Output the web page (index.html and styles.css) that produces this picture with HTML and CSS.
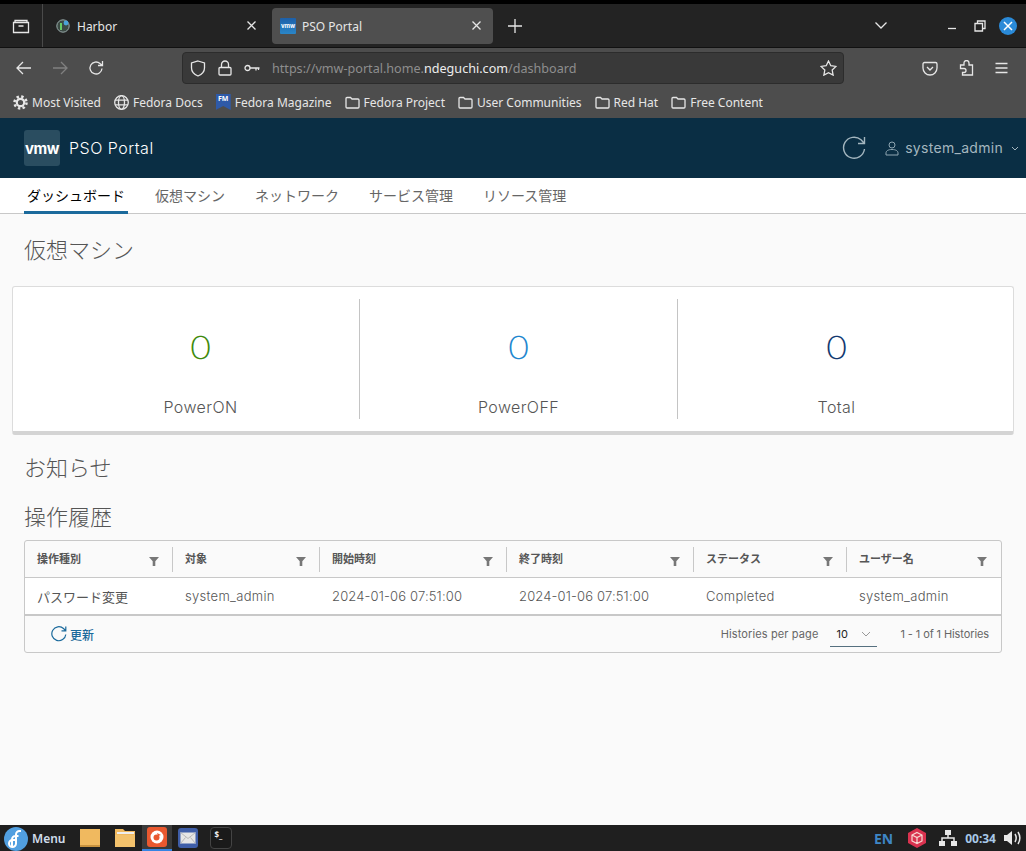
FILE: index.html
```html
<!DOCTYPE html>
<html lang="ja">

<head>
    <meta charset="UTF-8">
    <meta name="viewport" content="width=device-width, initial-scale=1.0">
    <title>PSO Portal</title>
    <link rel="stylesheet" href="styles.css">
</head>

<body>
    <div class="browser">
        <div class="tabbar">
            <div class="tab-list-btn">
                <svg class="ico" width="18" height="18" viewBox="0 0 18 18"><path d="M3 5.500V3.500h12v2M1.500 5.500h15v10h-15zM6.500 9h5"/></svg>
            </div>
            <div class="tab">
                <svg class="favicon" width="14" height="14" viewBox="0 0 14 14"><circle cx="7" cy="7" r="6.200" fill="#3c4a44" stroke="#9aa" stroke-width="1"/><path d="M5 4v7" stroke="#6c6" stroke-width="2"/><circle cx="10" cy="4" r="2.400" fill="#4aa3d8"/></svg>
                <span class="tab-title">Harbor</span>
                <svg class="ico tab-close" width="9" height="9" viewBox="0 0 9 9"><path d="M.5 .5l8 8M8.500 .5l-8 8"/></svg>
            </div>
            <div class="tab tab-active">
                <span class="favicon-vmw">vmw</span>
                <span class="tab-title">PSO Portal</span>
                <svg class="ico tab-close" width="9" height="9" viewBox="0 0 9 9"><path d="M.5 .5l8 8M8.500 .5l-8 8"/></svg>
            </div>
            <svg class="ico new-tab" width="14" height="14" viewBox="0 0 14 14"><path d="M7 0v14M0 7h14"/></svg>
            <div class="spacer"></div>
            <svg class="ico tabs-down" width="12" height="7" viewBox="0 0 12 7"><path d="M.5 .5L6 6 11.500 .5"/></svg>
            <div class="win-btns">
                <svg class="ico" width="10" height="10" viewBox="0 0 10 10"><path d="M1 7.500h8"/></svg>
                <svg class="ico" width="12" height="12" viewBox="0 0 12 12"><path d="M1 3.500h7.500V11H1zM3.500 3.500V1H11v7.500H8.500"/></svg>
                <span class="win-close">
                    <svg class="ico-white" width="10" height="10" viewBox="0 0 10 10"><path d="M1 1l8 8M9 1l-8 8"/></svg>
                </span>
            </div>
        </div>

        <div class="toolbar">
            <svg class="ico nav-btn" width="16" height="14" viewBox="0 0 16 14"><path d="M15 7H1M7 1L1 7l6 6"/></svg>
            <svg class="ico nav-btn nav-off" width="16" height="14" viewBox="0 0 16 14"><path d="M1 7h14M9 1l6 6-6 6"/></svg>
            <svg class="ico nav-btn" width="16" height="16" viewBox="0 0 16 16"><path d="M14 8.500a6 6 0 1 1-2-5L14.500 5.500M14.500 1v4.500H10"/></svg>
            <div class="urlbar">
                <svg class="ico" width="16" height="17" viewBox="0 0 16 17"><path d="M8 1l6.500 2v5c0 4-3 6.500-6.500 8-3.500-1.500-6.500-4-6.500-8V3z"/></svg>
                <svg class="ico" width="14" height="16" viewBox="0 0 14 16"><path d="M2 7.500h10a1 1 0 0 1 1 1V14a1 1 0 0 1-1 1H2a1 1 0 0 1-1-1V8.500a1 1 0 0 1 1-1zM3.500 7.500V4.500a3.500 3.500 0 0 1 7 0v3"/></svg>
                <svg class="ico" width="16" height="10" viewBox="0 0 16 10"><circle cx="3.500" cy="5" r="2.500"/><path d="M6 5h9.500M12 5v2.500M14.500 5v2"/></svg>
                <span class="url">https://vmw-portal.home.<b>ndeguchi.com</b>/dashboard</span>
                <div class="spacer"></div>
                <svg class="ico" width="17" height="16" viewBox="0 0 17 16"><path d="M8.500 1l2.300 4.700 5.200.7-3.800 3.600.9 5.100-4.600-2.400-4.600 2.400.9-5.100L1 6.400l5.200-.7z"/></svg>
            </div>
            <div class="toolbar-right">
                <svg class="ico" width="16" height="15" viewBox="0 0 16 15"><path d="M2.500 1.500h11a1.500 1.500 0 0 1 1.500 1.500v4a7 7 0 0 1-14 0V3a1.500 1.500 0 0 1 1.500-1.500zM5 6l3 3 3-3"/></svg>
                <svg class="ico" width="15" height="16" viewBox="0 0 15 16"><path d="M5 5V3a2.500 2.500 0 0 1 5 0v2h3.500v10H3.500v-2.500H5a2 2 0 0 0 0-4H1.500V5z"/></svg>
                <svg class="ico" width="13" height="12" viewBox="0 0 13 12"><path d="M.5 1.500h12M.5 6h12M.5 10.500h12"/></svg>
            </div>
        </div>

        <div class="bookmarks">
            <span class="bm">
                <svg class="gear" width="15" height="15" viewBox="0 0 15 15"><circle cx="7.500" cy="7.500" r="6" stroke-width="2.500" stroke-dasharray="2.400 2.310"/><circle cx="7.500" cy="7.500" r="3.700" stroke-width="2.200"/></svg>
                Most Visited
            </span>
            <span class="bm">
                <svg class="ico" width="15" height="15" viewBox="0 0 15 15"><circle cx="7.500" cy="7.500" r="6.800"/><ellipse cx="7.500" cy="7.500" rx="3" ry="6.800"/><path d="M1 5.200h13M1 9.800h13"/></svg>
                Fedora Docs
            </span>
            <span class="bm"><span class="fm-icon">FM</span>Fedora Magazine</span>
            <span class="bm"><svg class="ico" width="15" height="13" viewBox="0 0 15 13"><path d="M1 2.500a1 1 0 0 1 1-1h3.500l1.500 1.500h6a1 1 0 0 1 1 1v7a1 1 0 0 1-1 1H2a1 1 0 0 1-1-1z"/></svg>Fedora Project</span>
            <span class="bm"><svg class="ico" width="15" height="13" viewBox="0 0 15 13"><path d="M1 2.500a1 1 0 0 1 1-1h3.500l1.500 1.500h6a1 1 0 0 1 1 1v7a1 1 0 0 1-1 1H2a1 1 0 0 1-1-1z"/></svg>User Communities</span>
            <span class="bm"><svg class="ico" width="15" height="13" viewBox="0 0 15 13"><path d="M1 2.500a1 1 0 0 1 1-1h3.500l1.500 1.500h6a1 1 0 0 1 1 1v7a1 1 0 0 1-1 1H2a1 1 0 0 1-1-1z"/></svg>Red Hat</span>
            <span class="bm"><svg class="ico" width="15" height="13" viewBox="0 0 15 13"><path d="M1 2.500a1 1 0 0 1 1-1h3.500l1.500 1.500h6a1 1 0 0 1 1 1v7a1 1 0 0 1-1 1H2a1 1 0 0 1-1-1z"/></svg>Free Content</span>
        </div>
    </div>

    <div class="app">
        <header class="app-header">
            <div class="logo">vmw</div>
            <div class="app-name">PSO Portal</div>
            <div class="spacer"></div>
            <svg class="header-refresh" width="24" height="24" viewBox="0 0 24 24"><path d="M22.500 13a10.500 10.500 0 1 1-3.500-9.200L22 7M22.500 1v6.500H16"/></svg>
            <svg class="header-user" width="14" height="15" viewBox="0 0 14 15"><circle cx="7" cy="4" r="3"/><path d="M1 14v-2c0-2 2-3.500 6-3.500s6 1.500 6 3.500v2z"/></svg>
            <span class="user-name">system_admin</span>
            <svg class="header-caret" width="8" height="5" viewBox="0 0 8 5"><path d="M1 1l3 3 3-3"/></svg>
        </header>

        <nav class="subnav">
            <a class="subnav-item active">ダッシュボード</a>
            <a class="subnav-item">仮想マシン</a>
            <a class="subnav-item">ネットワーク</a>
            <a class="subnav-item">サービス管理</a>
            <a class="subnav-item">リソース管理</a>
        </nav>

        <main class="content">
            <h2 class="section-title">仮想マシン</h2>

            <div class="card">
                <div class="stat">
                    <div class="stat-num green">0</div>
                    <div class="stat-label">PowerON</div>
                </div>
                <div class="stat">
                    <div class="stat-num blue">0</div>
                    <div class="stat-label">PowerOFF</div>
                </div>
                <div class="stat">
                    <div class="stat-num navy">0</div>
                    <div class="stat-label">Total</div>
                </div>
            </div>

            <h2 class="section-title title-notice">お知らせ</h2>
            <h2 class="section-title title-history">操作履歴</h2>

            <div class="datagrid">
                <div class="grid-row grid-head">
                    <div class="cell col-1">操作種別<svg class="filter" width="10" height="10" viewBox="0 0 10 10"><path d="M0 1h10L6.300 5.200V10H3.700V5.200z"/></svg></div>
                    <div class="cell col-2">対象<svg class="filter" width="10" height="10" viewBox="0 0 10 10"><path d="M0 1h10L6.300 5.200V10H3.700V5.200z"/></svg></div>
                    <div class="cell col-3">開始時刻<svg class="filter" width="10" height="10" viewBox="0 0 10 10"><path d="M0 1h10L6.300 5.200V10H3.700V5.200z"/></svg></div>
                    <div class="cell col-3">終了時刻<svg class="filter" width="10" height="10" viewBox="0 0 10 10"><path d="M0 1h10L6.300 5.200V10H3.700V5.200z"/></svg></div>
                    <div class="cell col-5">ステータス<svg class="filter" width="10" height="10" viewBox="0 0 10 10"><path d="M0 1h10L6.300 5.200V10H3.700V5.200z"/></svg></div>
                    <div class="cell col-6">ユーザー名<svg class="filter" width="10" height="10" viewBox="0 0 10 10"><path d="M0 1h10L6.300 5.200V10H3.700V5.200z"/></svg></div>
                </div>
                <div class="grid-row grid-body">
                    <div class="cell col-1 cell-ja">パスワード変更</div>
                    <div class="cell col-2">system_admin</div>
                    <div class="cell col-3">2024-01-06 07:51:00</div>
                    <div class="cell col-3">2024-01-06 07:51:00</div>
                    <div class="cell col-5">Completed</div>
                    <div class="cell col-6">system_admin</div>
                </div>
                <div class="grid-foot">
                    <button class="refresh-btn">
                        <svg width="16" height="16" viewBox="0 0 16 16"><path d="M14.800 8.500a7 7 0 1 1-2.300-6L14.500 4.500M14.800 .5v4.300h-4.300"/></svg>
                        更新
                    </button>
                    <div class="spacer"></div>
                    <span class="per-page">Histories per page</span>
                    <div class="page-select">
                        <span>10</span>
                        <svg width="10" height="6" viewBox="0 0 10 6"><path d="M1 1l4 4 4-4"/></svg>
                    </div>
                    <span class="page-count">1 - 1 of 1 Histories</span>
                </div>
            </div>
        </main>
    </div>

    <footer class="taskbar">
        <div class="fedora-logo">
            <svg width="24" height="24" viewBox="0 0 24 24"><circle cx="12" cy="12" r="12" fill="#519fe0"/><path d="M8 21v-8.500a3.500 3.500 0 0 1 3.500-3.500h3M12 13H8.500a3.500 3.500 0 1 0 3.500 3.500V7.500A3.500 3.500 0 0 1 15.500 4H17" fill="none" stroke="#fff" stroke-width="2"/></svg>
        </div>
        <span class="menu-label">Menu</span>
        <div class="launchers">
            <span class="launcher"><svg width="22" height="22" viewBox="0 0 22 22"><path d="M1 2h20v18H1z" fill="#f0b95f"/><path d="M1 18h20v2H1z" fill="#c8923f"/></svg></span>
            <span class="launcher"><svg width="22" height="22" viewBox="0 0 22 22"><path d="M1 2h8l2 2h10v16H1z" fill="#f0b95f"/><path d="M3 5h17v2H3z" fill="#eee"/><path d="M1 8h20v12H1z" fill="#f3c26c"/></svg></span>
            <span class="launcher launcher-on"><svg width="20" height="20" viewBox="0 0 20 20"><rect width="20" height="20" rx="3" fill="#e9582f"/><circle cx="10" cy="10" r="6.500" fill="#fff"/><circle cx="9.500" cy="10.500" r="3" fill="#e9582f"/><path d="M10 6l4 2-3 1z" fill="#e9582f"/></svg></span>
            <span class="launcher launcher-sm"><svg width="20" height="20" viewBox="0 0 20 20"><rect width="20" height="20" rx="3" fill="#3f5ea8"/><rect x="2.500" y="4.500" width="15" height="11" fill="#e6e6e6"/><path d="M2.500 4.500l7.500 6 7.500-6M2.500 15.500l5-6M17.500 15.500l-5-6" fill="none" stroke="#b8b8b8"/></svg></span>
            <span class="launcher launcher-sm"><span class="term-icon">$_</span></span>
        </div>
        <div class="spacer"></div>
        <span class="lang">EN</span>
        <svg class="tray-box" width="18" height="20" viewBox="0 0 18 20"><path d="M9 0l9 5v10l-9 5-9-5V5z" fill="#d9324f"/><path d="M9 4.500l5 2.500v6l-5 2.500-5-2.500V7zM4 7l5 2.500L14 7M9 9.500v6" fill="none" stroke="#f7dcd5" stroke-width="1.200"/></svg>
        <svg class="tray-net" width="18" height="16" viewBox="0 0 18 16"><path d="M6 0h6v5H6zM0 11h6v5H0zM12 11h6v5h-6z" fill="#e8e8e8"/><path d="M9 5v3M3 11V8h12v3" fill="none" stroke="#e8e8e8" stroke-width="1.500"/></svg>
        <span class="clock">00:34</span>
        <svg class="tray-vol" width="18" height="16" viewBox="0 0 18 16"><path d="M0 5h3l5-4v14l-5-4H0z" fill="#e8e8e8"/><path d="M11 4c1.500 2.500 1.500 5.500 0 8M14 2c2.500 4 2.500 8 0 12" fill="none" stroke="#e8e8e8" stroke-width="1.500"/></svg>
    </footer>
</body>

</html>
```

FILE: styles.css
```css
* {
    box-sizing: border-box;
}

html,
body {
    margin: 0;
    height: 851px;
    overflow: hidden;
}

body {
    display: flex;
    flex-direction: column;
    font-family: Inter, "Noto Sans CJK JP", sans-serif;
    background-color: #fafafa;
}

.spacer {
    flex: 1;
}

.ico {
    fill: none;
    stroke: #e6e6e6;
    stroke-width: 1.3;
    flex-shrink: 0;
}

.ico-white {
    fill: none;
    stroke: #fff;
    stroke-width: 1.5;
}

/* browser chrome */
.browser {
    height: 118px;
    flex-shrink: 0;
    padding-top: 4px;
    background-color: #000;
    font-family: "Noto Sans", sans-serif;
    color: #e6e6e6;
}

.tabbar {
    height: 44px;
    display: flex;
    align-items: center;
    background-color: #232323;
    border-bottom: 1px solid #111;
}

.tab-list-btn {
    width: 43px;
    height: 43px;
    display: flex;
    align-items: center;
    justify-content: center;
    border-right: 1px solid #4a4a4a;
}

.tab {
    width: 229px;
    height: 36px;
    display: flex;
    align-items: center;
    padding: 0 16px 0 13px;
    font-size: 12px;
    border-radius: 4px;
}

.tab-active {
    width: 221px;
    padding: 0 12px 0 8px;
    background-color: #4f4f4f;
}

.tab-title {
    flex: 1;
    margin: 2px 0 0 7px;
}

.tab-active .tab-title {
    margin-left: 6px;
}

.favicon-vmw {
    width: 16px;
    height: 16px;
    display: flex;
    align-items: center;
    justify-content: center;
    font-family: Inter, sans-serif;
    font-size: 6px;
    font-weight: 700;
    color: #fff;
    background: linear-gradient(#1d5fa8, #2a86c8);
    border-radius: 1px;
}

.new-tab {
    margin-left: 15px;
}

.tabs-down {
    margin-right: 60px;
}

.win-btns {
    display: flex;
    align-items: center;
    gap: 17px;
    margin-right: 9px;
}

.win-close {
    width: 18px;
    height: 18px;
    margin-left: -4px;
    display: flex;
    align-items: center;
    justify-content: center;
    background-color: #2a8ad8;
    border-radius: 50%;
}

.toolbar {
    height: 40px;
    display: flex;
    align-items: center;
    padding-left: 16px;
    background-color: #4d4d4d;
}

.nav-btn {
    margin-right: 20px;
}

.nav-off {
    stroke: #808080;
}

.urlbar {
    width: 662px;
    height: 32px;
    display: flex;
    align-items: center;
    gap: 12px;
    margin-left: 58px;
    padding: 0 6px 0 7px;
    background-color: #393939;
    border: 1px solid #2c2c2c;
    border-radius: 4px;
}

.url {
    font-size: 12.6px;
    color: #8e8e8e;
}

.url b {
    font-weight: 400;
    color: #ededed;
}

.toolbar-right {
    display: flex;
    align-items: center;
    gap: 21px;
    margin-left: 78px;
}

.bookmarks {
    height: 30px;
    display: flex;
    align-items: center;
    gap: 13px;
    padding: 0 0 2px 13px;
    font-size: 12px;
    background-color: #4d4d4d;
}

.bm {
    display: flex;
    align-items: center;
    gap: 4px;
    white-space: nowrap;
}

.gear {
    fill: none;
    stroke: #e6e6e6;
}

.fm-icon {
    width: 15px;
    height: 16px;
    padding-top: 1px;
    font-size: 7px;
    font-weight: 700;
    line-height: 8px;
    text-align: center;
    color: #fff;
    background-color: #2f5aa8;
    clip-path: polygon(0 0, 100% 0, 100% 100%, 50% 75%, 0 100%);
}

/* portal */
.app {
    flex: 1;
}

.app-header {
    height: 60px;
    display: flex;
    align-items: center;
    padding: 0 7px 0 24px;
    background-color: #0a2e44;
}

.logo {
    width: 36px;
    height: 36px;
    display: flex;
    align-items: center;
    justify-content: center;
    font-size: 15px;
    font-weight: 700;
    letter-spacing: -0.5px;
    color: #fff;
    background-color: #2a4d60;
    border-radius: 3px;
}

.app-name {
    margin-left: 9px;
    font-size: 16px;
    font-weight: 300;
    letter-spacing: 0.5px;
    color: #fff;
}

.header-refresh {
    margin-right: 19px;
    fill: none;
    stroke: #a4b6bf;
    stroke-width: 1.4;
}

.header-user {
    margin-right: 6px;
    fill: none;
    stroke: #8fa6b2;
    stroke-width: 1;
}

.user-name {
    padding-bottom: 2px;
    font-size: 14px;
    letter-spacing: 0.3px;
    color: #a4b6bf;
}

.header-caret {
    margin-left: 8px;
    fill: none;
    stroke: #a4b6bf;
    stroke-width: 1;
}

.subnav {
    height: 36px;
    display: flex;
    gap: 28px;
    padding-left: 24px;
    background-color: #fff;
    border-bottom: 1px solid #c8c8c8;
}

.subnav-item {
    height: 36px;
    padding: 0 1px;
    font-size: 14px;
    line-height: 35px;
    color: #666;
}

.subnav-item.active {
    padding: 0 3px;
    margin-right: -2px;
    color: #000;
    border-bottom: 3px solid #1b6a9c;
}

.content {
    padding: 0 12px;
}

.section-title {
    margin: 0 0 0 12px;
    font-size: 22px;
    font-weight: 200;
    line-height: 28px;
    color: #555;
}

.content > .section-title:first-child {
    height: 72px;
    padding-top: 22px;
}

.card {
    height: 149px;
    display: flex;
    padding: 12px 18px 12px 29px;
    background-color: #fff;
    border: 1px solid #dcdcdc;
    border-bottom: 4px solid #d4d4d4;
    border-radius: 3px;
}

.stat {
    flex: 1;
    display: flex;
    flex-direction: column;
    align-items: center;
    border-right: 1px solid #c4c4c4;
}

.stat:last-child {
    border-right: none;
}

.stat-num {
    margin-top: 28px;
    font-size: 32px;
    font-weight: 200;
    line-height: 42px;
    transform: scaleX(1.2);
}

.green {
    color: #3f8a0c;
}

.blue {
    color: #1f87cf;
}

.navy {
    color: #12386f;
}

.stat-label {
    margin-top: 26px;
    font-size: 16px;
    font-weight: 300;
    letter-spacing: 0.4px;
    line-height: 24px;
    color: #565656;
}

.title-notice {
    margin-top: 19px;
}

.title-history {
    margin-top: 21px;
}

.datagrid {
    margin: 9px 12px 0;
    background-color: #fafafa;
    border: 1px solid #c8c8c8;
    border-radius: 3px;
}

.grid-row {
    display: flex;
}

.grid-head {
    height: 37px;
    border-bottom: 1px solid #c8c8c8;
}

.grid-head .cell {
    position: relative;
    justify-content: space-between;
    padding-right: 14px;
    padding-bottom: 2px;
    font-size: 11px;
    font-weight: 600;
    color: #565656;
}

.grid-head .cell::after {
    content: "";
    position: absolute;
    top: 6px;
    right: 0;
    height: 25px;
    border-right: 1px solid #c8c8c8;
}

.grid-head .cell:last-child::after {
    display: none;
}

.filter {
    fill: #777;
    margin-top: 5px;
}

.grid-body {
    height: 38px;
    align-items: center;
    background-color: #fff;
    border-bottom: 2px solid #c8c8c8;
    font-size: 13px;
    font-weight: 300;
    letter-spacing: 0.3px;
    color: #565656;
}

.grid-body .col-3 {
    letter-spacing: 0.15px;
}

.cell {
    height: 100%;
    padding-left: 12px;
    display: flex;
    align-items: center;
}

.cell-ja {
    font-weight: 400;
    letter-spacing: 0;
}

.col-1 {
    width: 148px;
}

.col-2 {
    width: 147px;
}

.col-3 {
    width: 187px;
}

.col-5 {
    width: 153px;
}

.col-6 {
    flex: 1;
}

.grid-foot {
    height: 36px;
    display: flex;
    align-items: center;
    padding: 0 12px 0 26px;
    font-size: 11px;
    color: #666;
}

.refresh-btn {
    display: flex;
    align-items: center;
    gap: 3px;
    padding: 0;
    font-family: inherit;
    font-size: 12px;
    font-weight: 500;
    color: #1b6a9c;
    background: none;
    border: none;
}

.refresh-btn svg {
    fill: none;
    stroke: #1b6a9c;
    stroke-width: 1.2;
}

.per-page {
    letter-spacing: 0.12px;
}

.page-count {
    letter-spacing: -0.1px;
}

.page-select {
    width: 47px;
    height: 25px;
    display: flex;
    align-items: center;
    justify-content: space-between;
    margin: 0 23px 0 12px;
    padding: 0 6px;
    color: #222;
    border-bottom: 1px solid #56707f;
}

.page-select svg {
    fill: none;
    stroke: #999;
}

/* desktop panel */
.taskbar {
    height: 26px;
    flex-shrink: 0;
    display: flex;
    align-items: center;
    padding: 0 4px;
    color: #e8e8e8;
    background-color: #1f1f1f;
    font-family: "Noto Sans", sans-serif;
}

.fedora-logo {
    height: 24px;
    margin-top: 2px;
}

.menu-label {
    margin-left: 4px;
    font-size: 12px;
    font-weight: 600;
    color: #cfdcea;
}

.launchers {
    display: flex;
    margin-left: 7px;
}

.launcher {
    width: 35px;
    height: 26px;
    display: flex;
    align-items: center;
    justify-content: center;
}

.launcher-on {
    width: 30px;
    background-color: #3a3a3a;
    border-bottom: 2px solid #3584e4;
}

.launcher-sm {
    width: 32px;
}

.term-icon {
    width: 22px;
    height: 22px;
    margin-left: 2px;
    padding: 1px 3px;
    font-size: 8px;
    font-weight: 700;
    color: #eee;
    background-color: #1a1a1a;
    border: 1px solid #444;
    border-radius: 4px;
}

.lang {
    margin-right: 15px;
    font-size: 14px;
    font-weight: 700;
    color: #3e86c6;
}

.tray-box {
    margin-right: 13px;
}

.tray-net {
    margin-right: 8px;
}

.clock {
    margin-right: 8px;
    font-size: 12px;
    font-weight: 700;
    color: #a8c8e8;
}
```
